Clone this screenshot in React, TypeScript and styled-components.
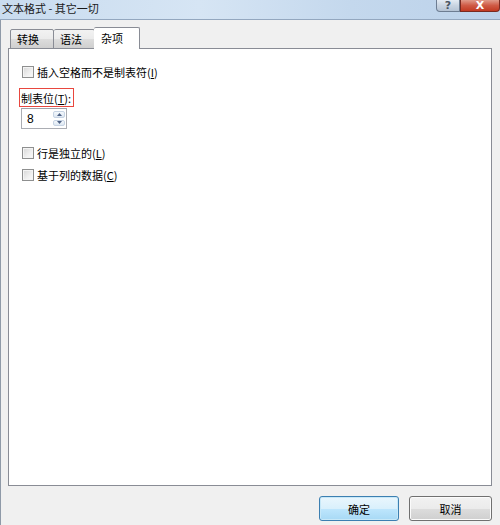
import React from "react";
import styled, { createGlobalStyle } from "styled-components";

const Global = createGlobalStyle`
  html, body { margin: 0; padding: 0; }
  body { width: 500px; height: 525px; overflow: hidden; background: #f0f0f0; }
  * { box-sizing: border-box; }
`;

const FONT = `"Noto Sans CJK SC", "Noto Sans", "Liberation Sans", sans-serif`;

const Window = styled.div`
  width: 500px;
  height: 525px;
  display: flex;
  flex-direction: column;
  background: #f0f0f0;
  font-family: ${FONT};
  font-size: 11px;
  color: #000;
`;

const TitleBar = styled.div`
  height: 20px;
  flex: none;
  display: flex;
  align-items: flex-start;
  justify-content: space-between;
  background: linear-gradient(to right, #c9dcef 0%, #d6e5f4 40%, #c4d8ed 70%, #bcd2ea 100%);
  border-bottom: 1px solid #93a7bf;
`;

const Title = styled.div`
  padding-left: 2px;
  line-height: 16px;
  font-size: 11px;
  color: #1a1a1a;
`;

const Caption = styled.div`
  display: flex;
  align-items: flex-start;
`;

const CapButton = styled.div<{ $close?: boolean }>`
  width: ${(p) => (p.$close ? "40px" : "24px")};
  height: 12px;
  display: flex;
  align-items: flex-end;
  justify-content: center;
  font-family: "DejaVu Sans", sans-serif;
  font-size: 11px;
  font-weight: bold;
  line-height: 11px;
  color: ${(p) => (p.$close ? "#fff" : "#4a5563")};
  border: 1px solid ${(p) => (p.$close ? "#7a2a20" : "#6d7d92")};
  border-top: none;
  border-radius: ${(p) => (p.$close ? "0 0 4px 0" : "0 0 0 4px")};
  background: ${(p) =>
    p.$close
      ? "linear-gradient(to bottom, #e09a8a 0%, #cf5a45 50%, #c23a22 100%)"
      : "linear-gradient(to bottom, #e4ebf3 0%, #c9d4e1 50%, #b5c3d4 100%)"};
  overflow: hidden;
`;

const Body = styled.div`
  flex: 1;
  display: flex;
  flex-direction: column;
  border-left: 1px solid #8f9aa8;
  padding: 7px 8px 0 7px;
`;

const TabStrip = styled.div`
  display: flex;
  align-items: flex-end;
  height: 22px;
  padding-left: 2px;
  position: relative;
  z-index: 1;
  margin-bottom: -1px;
`;

const Tab = styled.div<{ $active?: boolean; $w: number }>`
  width: ${(p) => p.$w}px;
  height: ${(p) => (p.$active ? "22px" : "20px")};
  display: flex;
  align-items: center;
  padding-left: ${(p) => (p.$active ? "7px" : "6px")};
  padding-bottom: ${(p) => (p.$active ? "2px" : "0")};
  border: 1px solid #898c95;
  border-bottom: ${(p) => (p.$active ? "none" : "1px solid #898c95")};
  border-left: ${(p) => (p.$active ? "1px solid #898c95" : "1px solid #898c95")};
  margin-left: ${(p) => (p.$active ? "-1px" : "0")};
  background: ${(p) =>
    p.$active ? "#ffffff" : "linear-gradient(to bottom, #f2f2f2 0%, #ebebeb 50%, #dddddd 51%, #cfcfcf 100%)"};
  border-radius: 2px 2px 0 0;
  font-size: 11px;
  & + & { border-left: none; }
`;

const Panel = styled.div`
  height: 438px;
  background: #fff;
  border: 1px solid #898c95;
  display: flex;
  flex-direction: column;
  align-items: flex-start;
  padding: 15px 0 0 12px;
`;

const CheckRow = styled.label<{ $mt: number }>`
  display: flex;
  align-items: center;
  gap: 3px;
  height: 14px;
  margin-top: ${(p) => p.$mt}px;
  margin-left: 1px;
  font-size: 11px;
`;

const Box = styled.span`
  width: 12px;
  height: 12px;
  border: 1px solid #8e8f8f;
  background: linear-gradient(135deg, #d6d6d6 0%, #f0f0f0 60%, #fbfbfb 100%);
  box-shadow: inset 0 0 0 1px #f4f4f4;
  flex: none;
`;

const TabLabel = styled.div`
  margin-top: 9px;
  margin-left: -2px;
  height: 19px;
  display: flex;
  align-items: center;
  padding: 0 2px 0 1px;
  border: 1px solid #e8473f;
  font-size: 11px;
`;

const Spin = styled.div`
  margin-top: 1px;
  width: 46px;
  height: 21px;
  border: 1px solid #abadb3;
  border-top-color: #9fa2a9;
  display: flex;
  align-items: stretch;
  background: #fff;
`;

const SpinValue = styled.div`
  flex: 1;
  display: flex;
  align-items: center;
  padding-left: 5px;
  font-family: "Liberation Sans", sans-serif;
  font-size: 12px;
`;

const SpinButtons = styled.div`
  width: 13px;
  display: flex;
  flex-direction: column;
  justify-content: center;
  gap: 2px;
  padding: 2px 1px 2px 0;
`;

const SpinArrow = styled.div`
  flex: 1;
  display: flex;
  align-items: center;
  justify-content: center;
  border: 1px solid #c6d3e3;
  border-radius: 2px;
  background: linear-gradient(to bottom, #f4f8fc, #dde7f2);
`;

const Footer = styled.div`
  display: flex;
  justify-content: flex-end;
  gap: 10px;
  padding: 10px 0 0 0;
`;

const Button = styled.div<{ $default?: boolean; $w: number }>`
  width: ${(p) => p.$w}px;
  height: 25px;
  display: flex;
  align-items: center;
  justify-content: center;
  font-size: 11px;
  border-radius: 3px;
  border: 1px solid ${(p) => (p.$default ? "#3c7fb1" : "#707070")};
  background: ${(p) =>
    p.$default
      ? "linear-gradient(to bottom, #eaf6fd 0%, #d9f0fc 50%, #bee6fd 51%, #a7d9f5 100%)"
      : "linear-gradient(to bottom, #f2f2f2 0%, #ebebeb 50%, #dddddd 51%, #cfcfcf 100%)"};
  box-shadow: inset 0 0 0 1px ${(p) => (p.$default ? "#c7e8f8" : "#fbfbfb")};
`;

const Arrow = ({ up }: { up?: boolean }) => (
  <svg width="5" height="3" viewBox="0 0 5 3">
    <path d={up ? "M0 3 L2.5 0 L5 3 Z" : "M0 0 L2.5 3 L5 0 Z"} fill="#4d6185" />
  </svg>
);

export default function App() {
  return (
    <>
      <Global />
      <Window>
        <TitleBar>
          <Title>文本格式 - 其它一切</Title>
          <Caption>
            <CapButton>?</CapButton>
            <CapButton $close>X</CapButton>
          </Caption>
        </TitleBar>
        <Body>
          <TabStrip>
            <Tab $w={44}>转换</Tab>
            <Tab $w={41}>语法</Tab>
            <Tab $w={46} $active>杂项</Tab>
          </TabStrip>
          <Panel>
            <CheckRow $mt={1}>
              <Box />
              <span>插入空格而不是制表符(<u>I</u>)</span>
            </CheckRow>
            <TabLabel>
              制表位(<u>T</u>):
            </TabLabel>
            <Spin>
              <SpinValue>8</SpinValue>
              <SpinButtons>
                <SpinArrow>
                  <Arrow up />
                </SpinArrow>
                <SpinArrow>
                  <Arrow />
                </SpinArrow>
              </SpinButtons>
            </Spin>
            <CheckRow $mt={17}>
              <Box />
              <span>行是独立的(<u>L</u>)</span>
            </CheckRow>
            <CheckRow $mt={8}>
              <Box />
              <span>基于列的数据(<u>C</u>)</span>
            </CheckRow>
          </Panel>
          <Footer>
            <Button $default $w={80}>确定</Button>
            <Button $w={83}>取消</Button>
          </Footer>
        </Body>
      </Window>
    </>
  );
}
